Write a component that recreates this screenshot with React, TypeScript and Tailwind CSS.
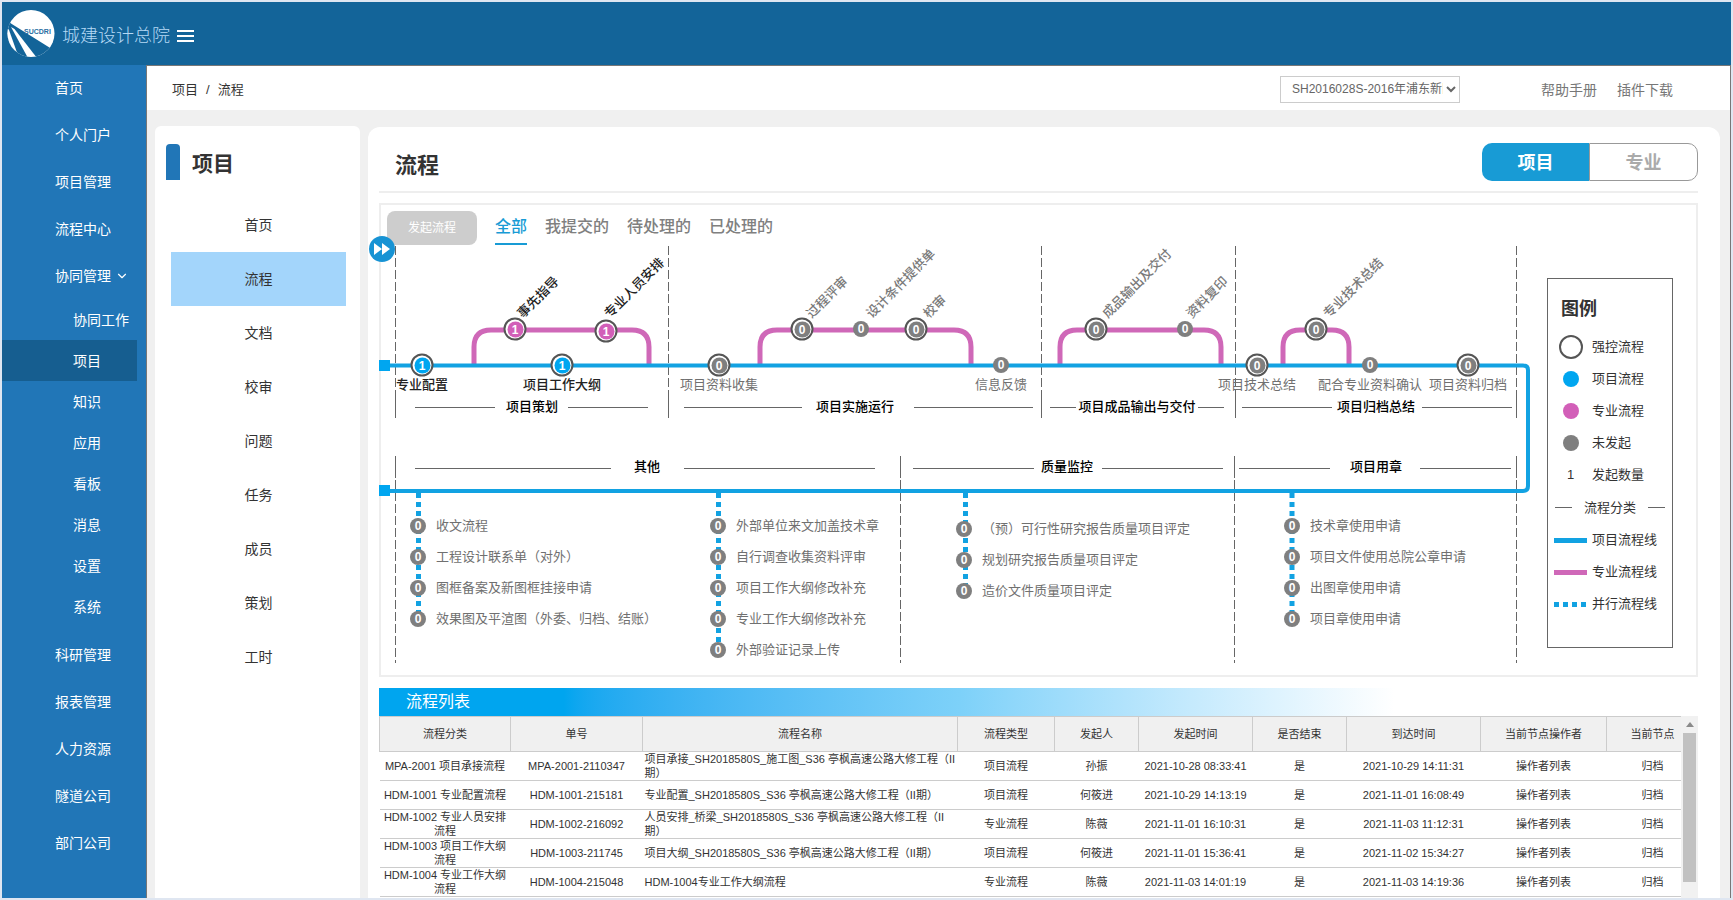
import { ChevronDown } from 'lucide-react'

type Tone = 'gray' | 'blue' | 'pink'

interface FlowNode {
	readonly x: number
	readonly y: number
	readonly label: string
	readonly count?: number
	readonly tone?: Tone
	readonly ring?: boolean
	readonly dark?: boolean
	/** left edge of the slanted label, only for nodes on a branch */
	readonly slantX?: number
}

interface FlowList {
	readonly x: number
	readonly y: number
	readonly items: readonly string[]
}

const menuTop = ['首页', '个人门户', '项目管理', '流程中心']
const menuSub = ['协同工作', '项目', '知识', '应用', '看板', '消息', '设置', '系统']
const menuBottom = ['科研管理', '报表管理', '人力资源', '隧道公司', '部门公司']
const projectMenu = ['首页', '流程', '文档', '校审', '问题', '任务', '成员', '策划', '工时']
const tabs = ['全部', '我提交的', '待处理的', '已处理的']

const toneClass: Record<Tone, string> = {
	gray: 'bg-[#7f7f7f]',
	blue: 'bg-[#00a6f0]',
	pink: 'bg-[#d25fb8]',
}

const mainNodes: readonly FlowNode[] = [
	{ x: 41, y: 120, label: '专业配置', count: 1, tone: 'blue', ring: true, dark: true },
	{ x: 181, y: 120, label: '项目工作大纲', count: 1, tone: 'blue', ring: true, dark: true },
	{ x: 338, y: 120, label: '项目资料收集', ring: true },
	{ x: 620, y: 120, label: '信息反馈' },
	{ x: 876, y: 120, label: '项目技术总结', ring: true },
	{ x: 989, y: 120, label: '配合专业资料确认' },
	{ x: 1087, y: 120, label: '项目资料归档', ring: true },
]

const branchNodes: readonly FlowNode[] = [
	{ x: 134, y: 84, label: '事先指导', slantX: 139, count: 1, tone: 'pink', ring: true, dark: true },
	{ x: 225, y: 86, label: '专业人员安排', slantX: 226, count: 1, tone: 'pink', ring: true, dark: true },
	{ x: 421, y: 84, label: '过程评审', slantX: 428, ring: true },
	{ x: 480, y: 84, label: '设计条件提供单', slantX: 488 },
	{ x: 535, y: 84, label: '校审', slantX: 545, ring: true },
	{ x: 715, y: 84, label: '成品输出及交付', slantX: 724, ring: true },
	{ x: 804, y: 84, label: '资料复印', slantX: 808 },
	{ x: 935, y: 84, label: '专业技术总结', slantX: 945, ring: true },
]

const stages = [
	{ x: 151, y: 162, label: '项目策划' },
	{ x: 474, y: 162, label: '项目实施运行' },
	{ x: 756, y: 162, label: '项目成品输出与交付' },
	{ x: 995, y: 162, label: '项目归档总结' },
	{ x: 266, y: 222, label: '其他' },
	{ x: 686, y: 222, label: '质量监控' },
	{ x: 995, y: 222, label: '项目用章' },
]

const lists: readonly FlowList[] = [
	{ x: 29, y: 265, items: ['收文流程', '工程设计联系单（对外）', '图框备案及新图框挂接申请', '效果图及平渲图（外委、归档、结账）'] },
	{ x: 329, y: 265, items: ['外部单位来文加盖技术章', '自行调查收集资料评审', '项目工作大纲修改补充', '专业工作大纲修改补充', '外部验证记录上传'] },
	{ x: 575, y: 268, items: ['（预）可行性研究报告质量项目评定', '规划研究报告质量项目评定', '造价文件质量项目评定'] },
	{ x: 903, y: 265, items: ['技术章使用申请', '项目文件使用总院公章申请', '出图章使用申请', '项目章使用申请'] },
]

const columns = [
	{ label: '流程分类', width: 'w-[131px]' },
	{ label: '单号', width: 'w-[132px]' },
	{ label: '流程名称', width: 'w-[315px]' },
	{ label: '流程类型', width: 'w-[97px]' },
	{ label: '发起人', width: 'w-[84px]' },
	{ label: '发起时间', width: 'w-[114px]' },
	{ label: '是否结束', width: 'w-[94px]' },
	{ label: '到达时间', width: 'w-[134px]' },
	{ label: '当前节点操作者', width: 'w-[126px]' },
	{ label: '当前节点', width: 'w-[92px]' },
]

const rows = [
	['MPA-2001 项目承接流程', 'MPA-2001-2110347', '项目承接_SH2018580S_施工图_S36 亭枫高速公路大修工程（II期）', '项目流程', '孙振', '2021-10-28 08:33:41', '是', '2021-10-29 14:11:31', '操作者列表', '归档'],
	['HDM-1001 专业配置流程', 'HDM-1001-215181', '专业配置_SH2018580S_S36 亭枫高速公路大修工程（II期）', '项目流程', '何筱进', '2021-10-29 14:13:19', '是', '2021-11-01 16:08:49', '操作者列表', '归档'],
	['HDM-1002 专业人员安排流程', 'HDM-1002-216092', '人员安排_桥梁_SH2018580S_S36 亭枫高速公路大修工程（II期）', '专业流程', '陈薇', '2021-11-01 16:10:31', '是', '2021-11-03 11:12:31', '操作者列表', '归档'],
	['HDM-1003 项目工作大纲流程', 'HDM-1003-211745', '项目大纲_SH2018580S_S36 亭枫高速公路大修工程（II期）', '项目流程', '何筱进', '2021-11-01 15:36:41', '是', '2021-11-02 15:34:27', '操作者列表', '归档'],
	['HDM-1004 专业工作大纲流程', 'HDM-1004-215048', 'HDM-1004专业工作大纲流程', '专业流程', '陈薇', '2021-11-03 14:01:19', '是', '2021-11-03 14:19:36', '操作者列表', '归档'],
]

export default function App() {
	return (
		<div className="flex h-screen flex-col overflow-hidden bg-[#dfe6f1] p-0.5 font-['Liberation_Sans','Noto_Sans_CJK_SC',sans-serif] text-[#333]">
			<Header />
			<div className="flex min-h-0 flex-1">
				<SideNav />
				<div className="flex min-w-0 flex-1 flex-col border-r border-t border-[#777] bg-[#f0f0f0]">
					<TopBar />
					<div className="flex min-h-0 flex-1 gap-2 pl-2 pr-2.5 pt-4">
						<ProjectNav />
						<FlowPage />
					</div>
				</div>
			</div>
		</div>
	)
}

function Header() {
	return (
		<header className="flex h-[63px] shrink-0 items-center bg-[#136499] pl-[5px]">
			<Logo />
			<h1 className="ml-[7px] mt-1 text-lg font-light text-[#b5d9f5]">城建设计总院</h1>
			<button type="button" aria-label="菜单" className="ml-[7px] mt-1 flex flex-col gap-[3px]">
				<span className="h-0.5 w-[17px] bg-white" />
				<span className="h-0.5 w-[17px] bg-white" />
				<span className="h-0.5 w-[17px] bg-white" />
			</button>
		</header>
	)
}

function Logo() {
	return (
		<svg viewBox="0 0 48 48" className="size-12" role="img" aria-label="SUCDRI">
			<defs>
				<clipPath id="logo-disc">
					<circle cx="24" cy="23.5" r="23.5" />
				</clipPath>
			</defs>
			<g clipPath="url(#logo-disc)">
				<rect width="48" height="48" fill="#fff" />
				<path d="M1 11 L4 13.500 L48 41 L40 48 L0 48 Z" fill="#136499" />
				<path d="M4 17 L7.500 19 L30 48 L21 48 Z" fill="#fff" />
				<path d="M0 17 L2 20 L10.500 44 L0 44 Z" fill="#fff" />
			</g>
			<text x="17" y="24" fontSize="7" fontWeight="700" fill="#2a6fa3">
				SUCDRI
			</text>
		</svg>
	)
}

function SideNav() {
	return (
		<nav className="w-[145px] shrink-0 border-r border-[#777] bg-[#2176b7] text-sm text-white">
			<ul className="-mt-px">
				{menuTop.map((item) => (
					<SideItem key={item} label={item} />
				))}
				<li>
					<a href="#" className="flex h-[47px] items-center gap-1 pl-[53px]">
						协同管理
						<ChevronDown size={14} strokeWidth={2} />
					</a>
					<ul className="pb-1">
						{menuSub.map((item) => (
							<li key={item}>
								<a
									href="#"
									className={`mr-[9px] flex h-[41px] items-center pl-[71px] ${item === '项目' ? 'bg-[#165e90]' : ''}`}
								>
									{item}
								</a>
							</li>
						))}
					</ul>
				</li>
				{menuBottom.map((item) => (
					<SideItem key={item} label={item} />
				))}
			</ul>
		</nav>
	)
}

function SideItem({ label }: { readonly label: string }) {
	return (
		<li>
			<a href="#" className="flex h-[47px] items-center pl-[53px]">
				{label}
			</a>
		</li>
	)
}

function TopBar() {
	return (
		<div className="flex h-11 shrink-0 items-center bg-white pl-[25px] pr-[57px]">
			<nav aria-label="面包屑" className="mt-1 flex gap-2 text-[13px]">
				<a href="#">项目</a>
				<span>/</span>
				<a href="#">流程</a>
			</nav>
			<select
				aria-label="选择项目"
				className="ml-auto mt-0.5 h-[27px] w-[180px] border border-[#ccc] bg-white pl-[7px] text-xs text-[#666]"
			>
				<option>SH2016028S-2016年浦东新区道路大修工程</option>
			</select>
			<a href="#" className="ml-[81px] mt-1 text-sm text-[#777]">
				帮助手册
			</a>
			<a href="#" className="ml-5 mt-1 text-sm text-[#777]">
				插件下载
			</a>
		</div>
	)
}

function ProjectNav() {
	return (
		<aside className="w-[205px] shrink-0 rounded-t-md bg-white pl-4 pr-3.5">
			<div className="flex items-center gap-3 pt-[18px]">
				<span className="-ml-[5px] h-9 w-3.5 rounded-t-sm bg-[#2176b7]" />
				<h2 className="mt-1 text-[21px] font-bold leading-8">项目</h2>
			</div>
			<ul className="mt-[18px] text-center text-sm">
				{projectMenu.map((item) => (
					<li key={item}>
						<a href="#" className={`block h-[54px] leading-[55px] ${item === '流程' ? 'bg-[#a3d5fb]' : ''}`}>
							{item}
						</a>
					</li>
				))}
			</ul>
		</aside>
	)
}

function FlowPage() {
	return (
		<main className="mt-px flex min-w-0 flex-1 flex-col rounded-t-xl bg-white pl-[11px] pr-[22px]">
			<header className="flex h-[66px] shrink-0 items-center justify-between border-b-2 border-[#eee]">
				<h2 className="mt-3 pl-4 text-[22px] font-bold">流程</h2>
				<div className="mt-1.5 flex h-[38px] w-[216px] text-lg font-bold">
					<button type="button" className="flex-1 rounded-l-[10px] bg-[#189bd5] pt-0.5 text-white">
						项目
					</button>
					<button type="button" className="flex-1 rounded-r-[10px] border border-[#999] pt-0.5 text-[#aaa]">
						专业
					</button>
				</div>
			</header>
			<section className="relative mt-2.5 h-[474px] shrink-0 border-2 border-[#eee]">
				<div className="flex h-10 gap-[18px] pl-1.5 pt-1.5">
					<button type="button" className="w-[90px] rounded-lg bg-[#cdcdcd] text-xs text-white">
						发起流程
					</button>
					{tabs.map((tab, i) => (
						<a
							key={tab}
							href="#"
							className={`border-b-2 text-base font-medium leading-8 ${i === 0 ? 'border-[#189bd5] text-[#189bd5]' : 'border-transparent text-[#808080]'}`}
						>
							{tab}
						</a>
					))}
				</div>
				<div className="flex">
					<FlowCanvas />
					<Legend />
				</div>
				<button
					type="button"
					aria-label="展开"
					className="absolute -left-3 top-[31px] flex size-[26px] items-center justify-center rounded-full bg-[#1793d4]"
				>
					<svg viewBox="0 0 16 12" className="h-3 w-4 fill-white">
						<path d="M0 0 L8 6 L0 12 Z M8 0 L16 6 L8 12 Z" />
					</svg>
				</button>
			</section>
			<FlowTable />
		</main>
	)
}

function FlowCanvas() {
	return (
		<div className="relative h-[425px] w-[1166px] shrink-0 text-[13px] leading-5">
			<svg width="1166" height="425" className="absolute left-0 top-0 overflow-visible" fill="none">
				<g stroke="#666" strokeWidth="1">
					{[14.5, 287.5, 660.5, 854.5, 1135.5].map((x) => (
						<g key={x}>
							<path d={`M${x} 1 V150`} strokeDasharray="9 3" />
							<path d={`M${x} 150 V173`} />
						</g>
					))}
					{[14.5, 519.5, 853.5, 1135.5].map((x) => (
						<g key={x}>
							<path d={`M${x} 211 V233`} />
							<path d={`M${x} 235 V418`} strokeDasharray="9 3" />
						</g>
					))}
					<path d="M34 162.5 H114 M187 162.5 H267 M303 162.5 H421 M533 162.5 H652 M669 162.5 H695 M817 162.5 H843 M861 162.5 H951 M1041 162.5 H1131" />
					<path d="M34 223.5 H230 M303 223.5 H494 M532 223.5 H653 M721 223.5 H842 M858 223.5 H949 M1039 223.5 H1130" />
				</g>
				<g stroke="#cf68b8" strokeWidth="5">
					<path d="M93 119 V102 Q93 85 110 85 H251 Q268 85 268 102 V119" />
					<path d="M379 119 V102 Q379 85 396 85 H573 Q590 85 590 102 V119" />
					<path d="M679 119 V102 Q679 85 696 85 H823 Q840 85 840 102 V119" />
					<path d="M902 119 V102 Q902 85 919 85 H951 Q968 85 968 102 V119" />
				</g>
				<path d="M3 120.500 H1142 Q1147 120.500 1147 125 V241 Q1147 246 1142 246 H3" stroke="#12a2e2" strokeWidth="4" />
				<rect x="-2" y="115" width="11" height="11" fill="#00a6f0" />
				<rect x="-2" y="240" width="11" height="11" fill="#00a6f0" />
				<path
					d="M37.500 248 V370 M337.500 248 V400 M584.500 248 V344 M911 248 V370"
					stroke="#12a2e2"
					strokeWidth="5"
					strokeDasharray="5 4"
				/>
			</svg>

			{mainNodes.map((node) => (
				<div key={node.label}>
					<Station node={node} />
					<span
						className={`absolute -translate-x-1/2 whitespace-nowrap ${node.dark ? 'font-medium text-[#222]' : 'text-[#707070]'}`}
						style={{ left: node.x, top: node.y + 10 }}
					>
						{node.label}
					</span>
				</div>
			))}

			{branchNodes.map((node) => (
				<div key={node.label}>
					<Station node={node} />
					<span
						className={`absolute origin-left -rotate-45 whitespace-nowrap font-medium ${node.dark ? 'text-[#222]' : 'text-[#7a7a7a]'}`}
						style={{ left: node.slantX, top: 61 }}
					>
						{node.label}
					</span>
				</div>
			))}

			{stages.map((stage) => (
				<span
					key={stage.label}
					className="absolute -translate-x-1/2 -translate-y-1/2 whitespace-nowrap font-medium text-black"
					style={{ left: stage.x, top: stage.y }}
				>
					{stage.label}
				</span>
			))}

			{lists.map((list) => (
				<ul key={list.x} className="absolute" style={{ left: list.x, top: list.y }}>
					{list.items.map((item) => (
						<li key={item}>
							<a href="#" className="flex h-[31px] items-center gap-2.5 whitespace-nowrap text-[#707070]">
								<Dot tone="gray" count={0} />
								{item}
							</a>
						</li>
					))}
				</ul>
			))}
		</div>
	)
}

function Station({ node }: { readonly node: FlowNode }) {
	return (
		<button
			type="button"
			aria-label={node.label}
			className={`absolute flex -translate-x-1/2 -translate-y-1/2 items-center justify-center rounded-full ${node.ring ? 'size-[23px] border-2 border-[#555] bg-white' : 'size-4'}`}
			style={{ left: node.x, top: node.y }}
		>
			<Dot tone={node.tone ?? 'gray'} count={node.count ?? 0} />
		</button>
	)
}

function Dot({ tone, count }: { readonly tone: Tone; readonly count?: number }) {
	return (
		<span
			className={`flex size-4 shrink-0 items-center justify-center rounded-full text-xs font-bold leading-4 text-white ${toneClass[tone]}`}
		>
			{count}
		</span>
	)
}

function Legend() {
	return (
		<aside className="mt-[33px] h-[370px] w-[126px] shrink-0 border border-[#666] text-[13px]">
			<h3 className="pl-[13px] pt-4 text-lg font-bold leading-7">图例</h3>
			<ul className="mt-2">
				<LegendRow label="强控流程">
					<span className="size-6 rounded-full border-2 border-[#555]" />
				</LegendRow>
				<LegendRow label="项目流程">
					<Dot tone="blue" />
				</LegendRow>
				<LegendRow label="专业流程">
					<Dot tone="pink" />
				</LegendRow>
				<LegendRow label="未发起">
					<Dot tone="gray" />
				</LegendRow>
				<LegendRow label="发起数量">1</LegendRow>
				<li className="flex h-[33px] items-center justify-center gap-3">
					<span className="h-px w-[17px] bg-[#666]" />
					流程分类
					<span className="h-px w-[17px] bg-[#666]" />
				</li>
				<LegendRow label="项目流程线">
					<span className="h-[5px] w-[33px] bg-[#12a2e2]" />
				</LegendRow>
				<LegendRow label="专业流程线">
					<span className="h-[5px] w-[33px] bg-[#cf68b8]" />
				</LegendRow>
				<LegendRow label="并行流程线">
					<svg width="33" height="5">
						<path d="M0 2.500 H33" stroke="#12a2e2" strokeWidth="5" strokeDasharray="5 4" />
					</svg>
				</LegendRow>
			</ul>
		</aside>
	)
}

function LegendRow({ label, children }: { readonly label: string; readonly children: React.ReactNode }) {
	return (
		<li className="flex h-8 items-center gap-[5px] whitespace-nowrap pl-1.5">
			<span className="flex w-[33px] shrink-0 justify-center">{children}</span>
			{label}
		</li>
	)
}

function FlowTable() {
	return (
		<section className="mt-[11px] flex min-h-0 flex-1 flex-col">
			<h3 className="h-7 shrink-0 bg-linear-to-r from-[#00a5ef] from-14% via-[#7dd1f9] via-44% to-white to-77% pl-[27px] text-base leading-7 text-white">
				流程列表
			</h3>
			<div className="flex min-h-0 flex-1">
				<div className="min-w-0 flex-1 overflow-hidden">
					<table className="w-[1319px] table-fixed border-collapse text-center text-[11px] leading-[14px]">
						<thead>
							<tr className="h-[35px] bg-[#f0f0f0]">
								{columns.map((col) => (
									<th key={col.label} className={`border border-[#ccc] font-normal ${col.width}`}>
										{col.label}
									</th>
								))}
							</tr>
						</thead>
						<tbody>
							{rows.map((row) => (
								<tr key={row[1]} className="border-b border-[#ccc]">
									{row.map((cell, i) => (
										<td key={columns[i].label} className={`h-[29px] ${i === 2 ? 'pl-0.5 text-left' : 'px-1'}`}>
											{cell}
										</td>
									))}
								</tr>
							))}
						</tbody>
					</table>
				</div>
				<div className="flex w-[17px] shrink-0 flex-col items-center bg-[#f1f1f1]" aria-hidden>
					<svg width="8" height="17" viewBox="0 0 8 17" className="shrink-0">
						<path d="M0 11 L4 6 L8 11 Z" fill="#8a8a8a" />
					</svg>
					<div className="h-[82%] w-[13px] bg-[#c1c1c1]" />
				</div>
			</div>
		</section>
	)
}
